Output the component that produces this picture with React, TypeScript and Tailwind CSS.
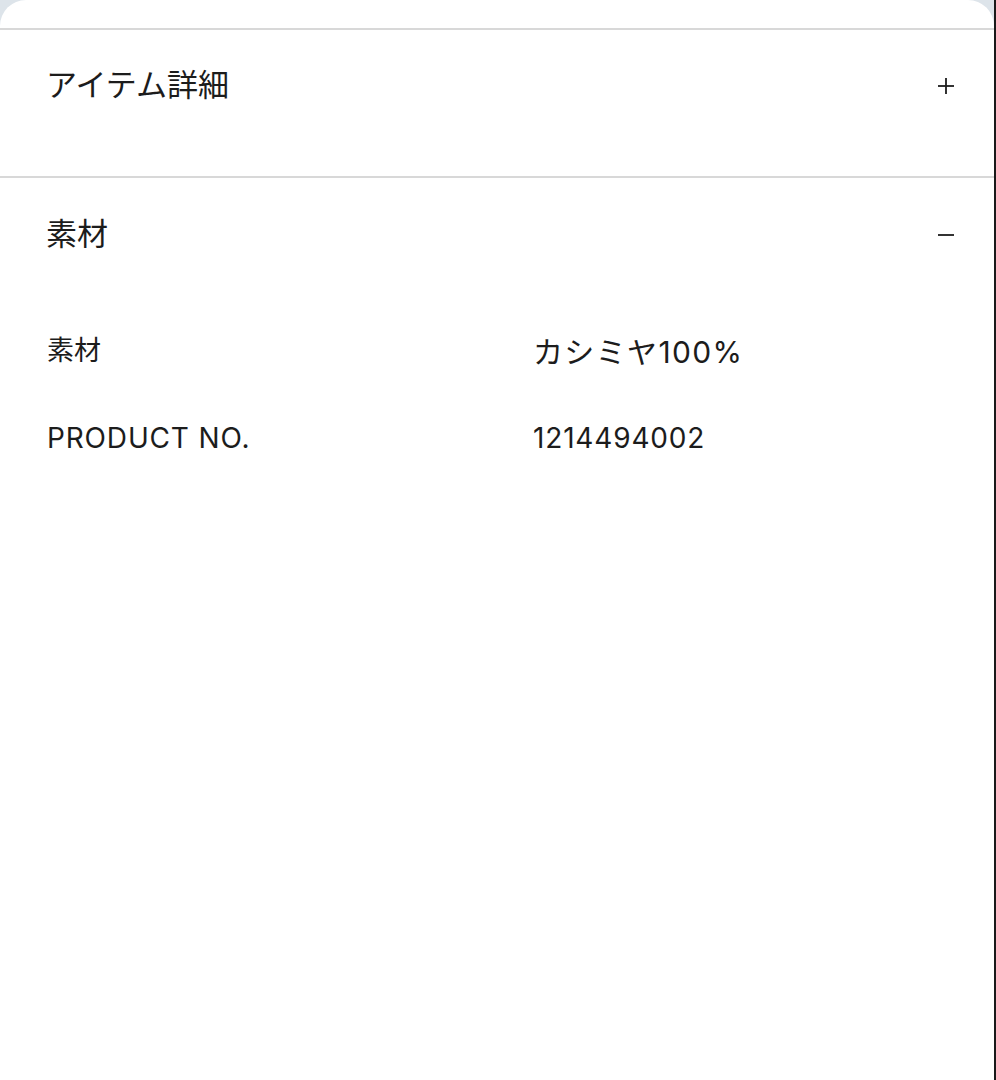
import React, { useState } from 'react';

type Row = { label: string; value: string; large?: boolean };

const MATERIAL_ROWS: Row[] = [
  { label: '素材', value: 'カシミヤ100%', large: true },
  { label: 'PRODUCT NO.', value: '1214494002' },
];

const font = "font-['Inter','Noto_Sans_CJK_JP',sans-serif]";

const Toggle: React.FC<{ open: boolean }> = ({ open }) => (
  <svg width="18" height="18" viewBox="0 0 18 18" className="mt-1 text-[#1c1c1c]">
    <line x1="1" y1="9" x2="17" y2="9" stroke="currentColor" strokeWidth="1.8" />
    {!open && <line x1="9" y1="1" x2="9" y2="17" stroke="currentColor" strokeWidth="1.8" />}
  </svg>
);

const App: React.FC = () => {
  const [openDetail, setOpenDetail] = useState(false);
  const [openMaterial, setOpenMaterial] = useState(true);

  return (
    <div className={`min-h-screen bg-[#dde4ea] border-r-2 border-[#1a1a1a] ${font}`}>
      <div className="min-h-screen bg-white rounded-t-[26px] text-[#1c1c1c]">
        <div className="h-[30px] border-b-2 border-[#d8d8d8]" />

        {/* Item details */}
        <section className="h-[148px] border-b-2 border-[#d8d8d8]">
          <button
            onClick={() => setOpenDetail(!openDetail)}
            className="w-full h-[108px] flex items-center justify-between pl-[46px] pr-[39px] text-left"
          >
            <span className="text-[31px] leading-none">アイテム詳細</span>
            <Toggle open={openDetail} />
          </button>
        </section>

        {/* Material */}
        <section>
          <button
            onClick={() => setOpenMaterial(!openMaterial)}
            className="w-full h-[110px] flex items-center justify-between pl-[46px] pr-[39px] text-left"
          >
            <span className="text-[31px] leading-none">素材</span>
            <Toggle open={openMaterial} />
          </button>
          {openMaterial && (
            <div className="pt-[18px] pl-[47px] pr-[39px]">
              {MATERIAL_ROWS.map(row => (
                <div key={row.label} className="h-[88px] grid grid-cols-[486px_1fr] items-center">
                  <span className={`${row.large ? 'text-[27px]' : 'text-[28px] tracking-[0.03em]'} leading-none`}>
                    {row.label}
                  </span>
                  <span
                    className={`${row.large ? 'text-[30px] mt-1 tracking-[0.045em]' : 'text-[28px] tracking-[0.03em]'} leading-none`}
                  >
                    {row.value}
                  </span>
                </div>
              ))}
            </div>
          )}
        </section>
      </div>
    </div>
  );
};

export default App;
